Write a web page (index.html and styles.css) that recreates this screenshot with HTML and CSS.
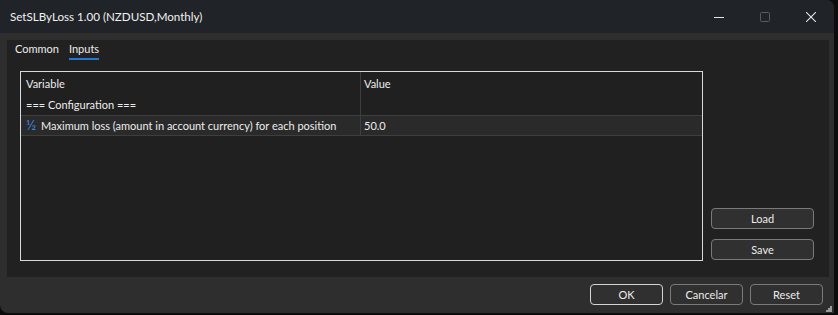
FILE: index.html
```html
<!DOCTYPE html>
<html lang="en">
<head>
    <meta charset="UTF-8">
    <title>SetSLByLoss 1.00 (NZDUSD,Monthly)</title>
    <link rel="stylesheet" href="styles.css">
</head>
<body>
    <div class="window">
        <div class="titlebar">
            <span class="title">SetSLByLoss 1.00 (NZDUSD,Monthly)</span>
            <div class="controls">
                <span class="ctl">
                    <svg width="10" height="10" viewBox="0 0 10 10"><line x1="0" y1="5.5" x2="10" y2="5.5" stroke="#e6e6e6" stroke-width="1"/></svg>
                </span>
                <span class="ctl">
                    <svg width="10" height="10" viewBox="0 0 10 10"><rect x="0.5" y="0.5" width="9" height="9" rx="1" fill="none" stroke="#5a5c5f" stroke-width="1"/></svg>
                </span>
                <span class="ctl">
                    <svg width="10" height="10" viewBox="0 0 10 10"><path d="M0 0 L10 10 M10 0 L0 10" stroke="#e6e6e6" stroke-width="1.1"/></svg>
                </span>
            </div>
        </div>
        <div class="panel">
            <div class="tabs">
                <span class="tab">Common</span>
                <span class="tab active">Inputs</span>
            </div>
            <div class="panel-body">
                <div class="grid">
                    <div class="grid-head">
                        <div class="col-var">
                            <div class="head-label">Variable</div>
                            <div class="group-label">=== Configuration ===</div>
                        </div>
                        <div class="col-val">
                            <div class="head-label">Value</div>
                        </div>
                    </div>
                    <div class="grid-row">
                        <div class="col-var"><span class="type-icon">½</span>Maximum loss (amount in account currency) for each position</div>
                        <div class="col-val">50.0</div>
                    </div>
                </div>
                <div class="side-buttons">
                    <button class="btn side">Load</button>
                    <button class="btn side">Save</button>
                </div>
            </div>
        </div>
        <div class="footer">
            <button class="btn default">OK</button>
            <button class="btn">Cancelar</button>
            <button class="btn">Reset</button>
            <span class="grip">
                <svg width="6" height="6" viewBox="0 0 6 6" fill="#9a9a9a">
                    <rect x="4" y="0" width="2" height="2"/>
                    <rect x="2" y="2" width="2" height="2"/><rect x="4" y="2" width="2" height="2"/>
                    <rect x="0" y="4" width="2" height="2"/><rect x="2" y="4" width="2" height="2"/><rect x="4" y="4" width="2" height="2"/>
                </svg>
            </span>
        </div>
    </div>
</body>
</html>
```

FILE: styles.css
```css
body {
    margin: 0;
    background-color: #0c0c0c;
    font-family: Lato, 'Noto Sans', sans-serif;
    font-size: 11px;
    color: #ededed;
}
.window {
    width: 834px;
    height: 313px;
    background-color: #2e2e2e;
    border-radius: 0 8px 0 8px;
    display: flex;
    flex-direction: column;
    overflow: hidden;
    position: relative;
}
.titlebar {
    height: 33px;
    background-color: #202327;
    display: flex;
    align-items: center;
    justify-content: space-between;
}
.title {
    padding-left: 10px;
    font-size: 11.6px;
    color: #f0f0f0;
}
.controls {
    display: flex;
    height: 100%;
}
.ctl {
    width: 46px;
    display: flex;
    align-items: center;
    justify-content: center;
}
.panel {
    margin: 7px 5px 0 7px;
    height: 237px;
    background-color: #212121;
    display: flex;
    flex-direction: column;
}
.tabs {
    display: flex;
    gap: 10px;
    padding: 0 0 0 8px;
    height: 31px;
}
.tab {
    line-height: 18px;
    height: 18px;
    color: #ececec;
}
.tab.active {
    border-bottom: 2px solid #1f78d1;
}
.panel-body {
    display: flex;
    gap: 8px;
    padding: 0 15px 16px 13px;
    flex: 1;
}
.grid {
    width: 682px;
    height: 188px;
    border: 1px solid #d9d9d9;
    background-color: #202020;
}
.grid-head, .grid-row {
    display: flex;
    border-bottom: 1px solid #3e3e3e;
}
.grid-head {
    height: 43px;
}
.grid-row {
    height: 19px;
    background-color: #2a2a2a;
    line-height: 20px;
}
.col-var {
    box-sizing: border-box;
    width: 340px;
    border-right: 1px solid #3e3e3e;
    padding-left: 5px;
    white-space: nowrap;
}
.col-val {
    flex: 1;
    padding-left: 3px;
}
.head-label {
    height: 22px;
    line-height: 24px;
}
.group-label {
    line-height: 22px;
}
.type-icon {
    color: #3d82da;
    font-size: 14px;
    display: inline-block;
    width: 15px;
    line-height: 18px;
}
.side-buttons {
    display: flex;
    flex-direction: column;
    justify-content: flex-end;
    gap: 10px;
    padding-bottom: 1px;
}
.btn {
    font-family: Lato, 'Noto Sans', sans-serif;
    font-size: 11px;
    color: #ececec;
    background-color: #303030;
    border: 1px solid #7a7a7a;
    border-radius: 4px;
    width: 73px;
    height: 21px;
    padding: 0;
    line-height: 18px;
}
.btn.side {
    width: 103px;
}
.btn.default {
    border-color: #d4d4d4;
}
.footer {
    flex: 1;
    display: flex;
    justify-content: flex-end;
    align-items: flex-start;
    gap: 7px;
    padding: 7px 11px 0 0;
}
.grip {
    position: absolute;
    right: 2px;
    bottom: 1px;
    display: flex;
}
```
